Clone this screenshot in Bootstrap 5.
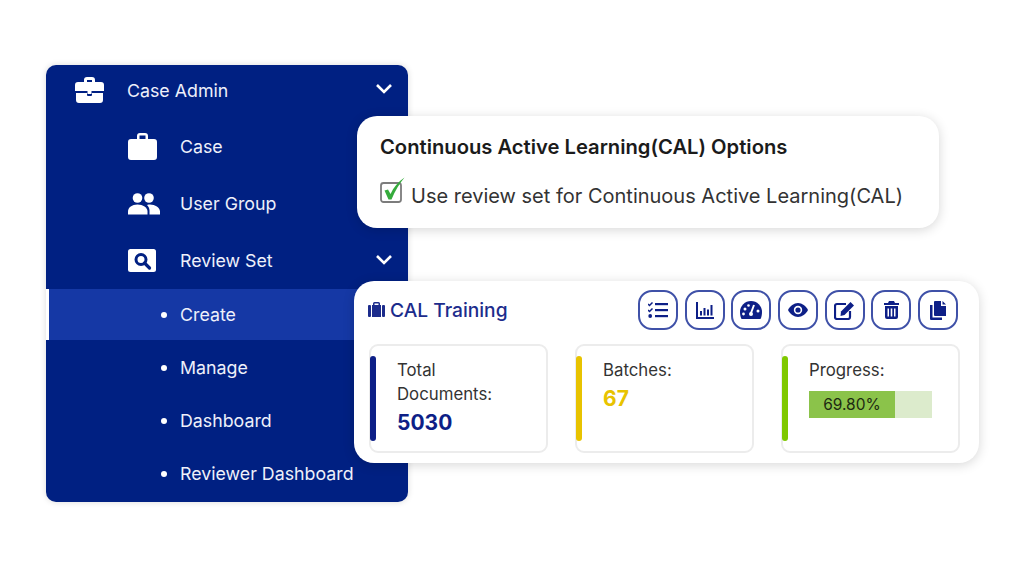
<!DOCTYPE html>
<html lang="en">
  <head>
    <meta charset="UTF-8" />
    <title>CAL Training</title>
    <meta name="viewport" content="width=device-width, initial-scale=1" />
    <link href="https://cdn.jsdelivr.net/npm/bootstrap@5.3.0/dist/css/bootstrap.min.css" rel="stylesheet" />
    <style>
      html, body { height: 100%; }
      body { font-family: Inter, "Liberation Sans", sans-serif; background: #fff; overflow: hidden; }
      .stage { position: relative; width: 1024px; height: 576px; padding: 65px 0 0 46px; }

      .side-menu { width: 362px; height: 437px; background: #002082; border-radius: 10px; overflow: hidden; box-shadow: 0 0 6px rgba(0,0,0,.15); color: #eef0fa; }
      .side-item { background: transparent; border: 0; color: #eef0fa; font-size: 17.8px; border-radius: 0; padding: 0; display: flex; align-items: center; position: relative; height: 57px; }
      .side-item.top-row { height: 53px; padding-bottom: 3px; }
      .side-item.sub-row { height: 51px; margin-bottom: 2px; }
      .side-item.current { background: #1538a5; border-left: 3px solid #fff; }
      .side-label { padding-top: 2px; }
      .slot-top { width: 81px; padding-left: 29px; flex: none; }
      .slot-mid { width: 134px; padding-left: 82px; flex: none; }
      .slot-sub { width: 134px; padding-left: 115px; flex: none; }
      .current .slot-sub { width: 131px; padding-left: 112px; }
      .dot-mark { display: block; width: 6px; height: 6px; border-radius: 50%; background: #fff; }
      .chev { position: absolute; right: 15px; top: 50%; margin-top: -7px; }
      .top-row .chev { margin-top: -9px; }

      .float-card { position: absolute; background: #fff; border: 0; border-radius: 20px; box-shadow: 0 2px 12px rgba(0,0,0,.16); }
      .cal-options { left: 357px; top: 116px; width: 582px; height: 112px; padding: 18px 23px; }
      .cal-options h5 { font-size: 20.2px; font-weight: 600; color: #1b1b1b; margin: 0 0 17px; line-height: 26px; }
      .cal-check { font-size: 20px; color: #333; line-height: 28px; gap: 6px; }
      .cal-check svg { flex: none; margin-top: -8px; }
      .cal-check span { margin-top: 5px; }
      .cal-train { left: 354px; top: 281px; width: 625px; height: 182px; padding: 9px 21px 10px 14px; }
      .train-title { font-size: 19.2px; font-weight: 500; color: #1c2c8c; gap: 5px; }
      .train-title span { padding-top: 1px; }
      .tool-btn { width: 40px; height: 40px; padding: 0; border: 2px solid #3f51a8; border-radius: 14px; background: #fff; display: flex; align-items: center; justify-content: center; }
      .tool-row { gap: 6.7px; }
      .stat-row { margin-top: 14px; gap: 27px; margin-left: 1px; }
      .stat-box { flex: none; width: 179px; height: 109px; border: 2px solid #ececec; border-radius: 9px; position: relative; padding: 12px 10px 0 26px; color: #333; font-size: 16.8px; line-height: 24px; }
      .stat-bar { position: absolute; left: -1px; top: 10px; width: 6px; height: 85px; border-radius: 3px; }
      .stat-num { font-size: 21px; font-weight: 700; line-height: 32px; padding-top: 1px; }
      .navy-num { color: #0d1f87; }
      .gold-num { color: #e8c300; }
      .bar-navy { background: #0d1f87; }
      .bar-gold { background: #e8c300; }
      .bar-lime { background: #7fc800; }
      .cal-progress { width: 123px; height: 27px; border-radius: 0; background: #dcebcc; margin-top: 9px; }
      .cal-progress .progress-bar { background: #8bc34a; color: #1d2a12; font-size: 15.5px; overflow: visible; }
    </style>
  </head>
  <body>
    <div class="stage">
      <!-- left menu -->
      <div class="side-menu">
        <div class="list-group list-group-flush">
          <a class="list-group-item side-item top-row">
            <span class="slot-top">
              <svg width="29" height="26" viewBox="0 0 29 26" class="d-block" fill="#fff"><path d="M9 5V3a3 3 0 0 1 3-3h5a3 3 0 0 1 3 3v2h6a3 3 0 0 1 3 3v6H0V8a3 3 0 0 1 3-3zm3 0h5V3h-5z"/><path d="M1 16h11v2a1 1 0 0 0 1 1h3a1 1 0 0 0 1-1v-2h11v7a3 3 0 0 1-3 3H4a3 3 0 0 1-3-3z"/><rect x="12.500" y="12" width="4" height="5"/></svg>
            </span>
            <span class="side-label">Case Admin</span>
            <svg class="chev" width="18" height="12" viewBox="0 0 18 12"><path d="M2 2l7 7 7-7" fill="none" stroke="#fff" stroke-width="2.6"/></svg>
          </a>
          <a class="list-group-item side-item">
            <span class="slot-mid">
              <svg width="29" height="27" viewBox="0 0 29 27" class="d-block" fill="#fff"><path d="M9 6V3a3 3 0 0 1 3-3h5a3 3 0 0 1 3 3v3h6a3 3 0 0 1 3 3v15a3 3 0 0 1-3 3H3a3 3 0 0 1-3-3V9a3 3 0 0 1 3-3zm2.500 0h6V2.500h-6z"/></svg>
            </span>
            <span class="side-label">Case</span>
          </a>
          <a class="list-group-item side-item">
            <span class="slot-mid">
              <svg width="32" height="22" viewBox="0 0 32 22" class="d-block" fill="#fff"><circle cx="9.500" cy="5" r="4.800"/><circle cx="21" cy="5" r="4.800"/><path d="M0 21.500v-3c0-4 4-7 9.500-7s10 3 10 7v3z"/><path d="M21.500 21.500v-4c0-2-1-4-2.500-5.500 1-.4 2-.5 3-.5 5 0 10 3 10 7v3z"/></svg>
            </span>
            <span class="side-label">User Group</span>
          </a>
          <a class="list-group-item side-item">
            <span class="slot-mid">
              <svg width="28" height="23" viewBox="0 0 28 23" class="d-block"><rect width="28" height="23" rx="2.500" fill="#fff"/><circle cx="13" cy="10.500" r="5" fill="none" stroke="#002082" stroke-width="3"/><path d="M16.500 14l5 5" stroke="#002082" stroke-width="3.200" stroke-linecap="round"/></svg>
            </span>
            <span class="side-label">Review Set</span>
            <svg class="chev" width="18" height="12" viewBox="0 0 18 12"><path d="M2 2l7 7 7-7" fill="none" stroke="#fff" stroke-width="2.6"/></svg>
          </a>
          <a class="list-group-item side-item sub-row current"><span class="slot-sub"><i class="dot-mark"></i></span><span class="side-label">Create</span></a>
          <a class="list-group-item side-item sub-row"><span class="slot-sub"><i class="dot-mark"></i></span><span class="side-label">Manage</span></a>
          <a class="list-group-item side-item sub-row"><span class="slot-sub"><i class="dot-mark"></i></span><span class="side-label">Dashboard</span></a>
          <a class="list-group-item side-item sub-row"><span class="slot-sub"><i class="dot-mark"></i></span><span class="side-label">Reviewer Dashboard</span></a>
        </div>
      </div>

      <!-- options card -->
      <div class="card float-card cal-options">
        <h5>Continuous Active Learning(CAL) Options</h5>
        <div class="d-flex align-items-center cal-check">
          <svg width="25" height="26" viewBox="0 0 25 26"><rect x="1" y="6" width="20" height="19" rx="2.500" fill="#fff" stroke="#7c7c7c" stroke-width="1.800"/><path d="M4.500 13.500l3.500-1 2.500 4.500C13.500 10.500 18 5 24.500.500 19.500 6.500 15 14 11.500 22.500H8.500z" fill="#35ab3c"/></svg>
          <span>Use review set for Continuous Active Learning(CAL)</span>
        </div>
      </div>

      <!-- training card -->
      <div class="card float-card cal-train">
        <div class="d-flex align-items-center justify-content-between">
          <div class="d-flex align-items-center train-title">
            <svg width="17" height="15" viewBox="0 0 17 15" fill="#1c2c8c"><rect y="3" width="3" height="12" rx="1"/><rect x="14" y="3" width="3" height="12" rx="1"/><path d="M5 3V1.500A1.500 1.500 0 0 1 6.500 0h4A1.500 1.500 0 0 1 12 1.500V3h1v12H4V3zm1.500 0h4V1.500h-4z"/></svg>
            <span>CAL Training</span>
          </div>
          <div class="d-flex tool-row">
            <button class="btn tool-btn"><svg width="20" height="16" viewBox="0 0 20 16" fill="#0d1f87"><rect x="7" y="1" width="13" height="2.200"/><rect x="7" y="7" width="13" height="2.200"/><rect x="7" y="13" width="13" height="2.200"/><path d="M0 2l1.500 1.500L4.500.500" fill="none" stroke="#0d1f87" stroke-width="1.500"/><path d="M0 8l1.500 1.500 3-3" fill="none" stroke="#0d1f87" stroke-width="1.500"/><circle cx="2.200" cy="14" r="1.900"/></svg></button>
            <button class="btn tool-btn"><svg width="18" height="17" viewBox="0 0 18 17" fill="#0d1f87"><path d="M0 0h2v15h16v2H0z"/><rect x="4" y="9" width="2" height="4.500"/><rect x="7.500" y="6" width="2" height="7.500"/><rect x="11" y="7.500" width="2" height="6"/><rect x="14.500" y="3" width="2" height="10.500"/></svg></button>
            <button class="btn tool-btn"><svg width="22" height="18" viewBox="0 0 22 18"><path d="M0 11a11 11 0 0 1 22 0c0 2.500-.5 5-1.500 7h-19C.5 16 0 13.500 0 11z" fill="#0d1f87"/><path d="M11 12l3-8" stroke="#fff" stroke-width="2"/><circle cx="11" cy="13" r="2" fill="#fff"/><circle cx="5" cy="8" r="1.500" fill="#fff"/><circle cx="8.500" cy="4.500" r="1.300" fill="#fff"/><circle cx="18" cy="10" r="1.500" fill="#fff"/><circle cx="3.500" cy="13" r="1.400" fill="#fff"/></svg></button>
            <button class="btn tool-btn"><svg width="20" height="14" viewBox="0 0 20 14"><path d="M0 7c2-4 6-7 10-7s8 3 10 7c-2 4-6 7-10 7S2 11 0 7z" fill="#0d1f87"/><circle cx="10" cy="7" r="4.200" fill="#fff"/><circle cx="10" cy="7" r="2.600" fill="#0d1f87"/></svg></button>
            <button class="btn tool-btn"><svg width="21" height="19" viewBox="0 0 21 19"><path d="M12 3H3a2 2 0 0 0-2 2v11a2 2 0 0 0 2 2h11a2 2 0 0 0 2-2v-6" fill="none" stroke="#0d1f87" stroke-width="2.200"/><path d="M7 10.500L16.500 1 20 4.500 10.500 14 6.500 15z" fill="#0d1f87"/></svg></button>
            <button class="btn tool-btn"><svg width="15" height="18" viewBox="0 0 15 18" fill="#0d1f87"><path d="M5 0h5l1 2h4v2H0V2h4z"/><path d="M1 5h13v11a2 2 0 0 1-2 2H3a2 2 0 0 1-2-2zm2.500 2.500v8h1.500v-8zm3.200 0v8h1.600v-8zm3.300 0v8h1.500v-8z" fill-rule="evenodd"/></svg></button>
            <button class="btn tool-btn"><svg width="16" height="19" viewBox="0 0 16 19" fill="#0d1f87"><path d="M5 0h6v5h5v10H5a1 1 0 0 1-1-1V1a1 1 0 0 1 1-1z"/><path d="M12.500 0L16 3.500h-3.500z"/><path d="M0 4h2.500v12.500H12V19H1a1 1 0 0 1-1-1z"/></svg></button>
          </div>
        </div>
        <div class="d-flex stat-row">
          <div class="stat-box">
            <span class="stat-bar bar-navy"></span>
            <div>Total<br />Documents:</div>
            <div class="stat-num navy-num">5030</div>
          </div>
          <div class="stat-box">
            <span class="stat-bar bar-gold"></span>
            <div>Batches:</div>
            <div class="stat-num gold-num">67</div>
          </div>
          <div class="stat-box">
            <span class="stat-bar bar-lime"></span>
            <div>Progress:</div>
            <div class="progress cal-progress"><div class="progress-bar" style="width: 69.8%">69.80%</div></div>
          </div>
        </div>
      </div>
    </div>
    <script src="https://cdn.jsdelivr.net/npm/bootstrap@5.3.0/dist/js/bootstrap.bundle.min.js"></script>
  </body>
</html>
